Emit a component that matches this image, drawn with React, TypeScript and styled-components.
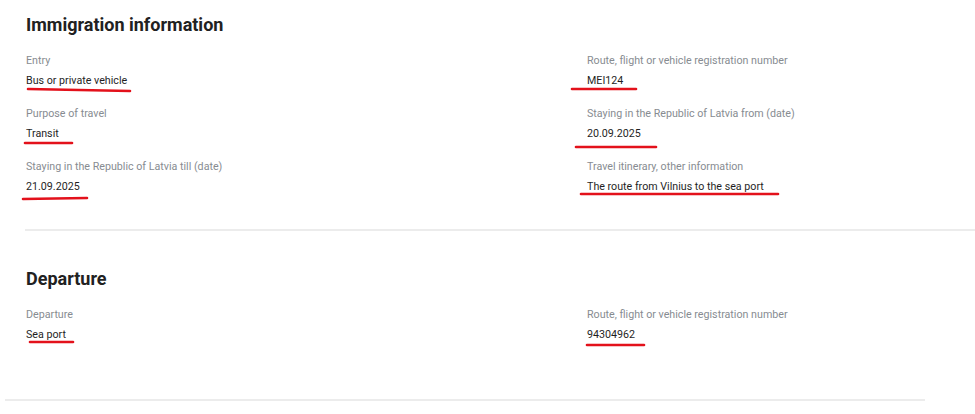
import React from "react";
import styled, { createGlobalStyle } from "styled-components";

const GlobalStyle = createGlobalStyle`
  html, body { margin: 0; padding: 0; background: #ffffff; }
  body { font-family: Roboto, "Noto Sans", "Liberation Sans", sans-serif; color: #222222; }
`;

const Page = styled.div`
  width: 975px;
  padding-top: 13px;
  box-sizing: border-box;
`;

const Section = styled.section<{ $top?: number }>`
  padding-left: 26px;
  padding-top: ${(p) => p.$top ?? 0}px;
`;

const Title = styled.h2`
  margin: 0 0 14px 0;
  font-size: 18px;
  line-height: 24px;
  font-weight: 700;
  color: #212121;
`;

const Grid = styled.div`
  display: grid;
  grid-template-columns: 561px 1fr;
  row-gap: 13px;
`;

const Field = styled.div`
  display: flex;
  flex-direction: column;
`;

const Label = styled.div`
  font-size: 10.7px;
  line-height: 20px;
  color: #878c91;
`;

const Value = styled.div`
  position: relative;
  font-size: 10.7px;
  line-height: 20px;
  color: #1f1f1f;
  width: max-content;
`;

const Mark = styled.svg`
  position: absolute;
  overflow: visible;
  pointer-events: none;
`;

const Divider = styled.hr<{ $left: number; $width?: number; $top: number }>`
  border: none;
  height: 2px;
  background: #ececec;
  margin: ${(p) => p.$top}px 0 0 ${(p) => p.$left}px;
  width: ${(p) => (p.$width ? `${p.$width}px` : "auto")};
`;

type Stroke = { dx: number; w: number; y1: number; y2: number };

const Underline = ({ s }: { s: Stroke }) => {
  const base = Math.min(s.y1, s.y2) - 1;
  return (
    <Mark width={s.w} height={4} style={{ left: s.dx, top: base }}>
      <line
        x1={0}
        y1={s.y1 - base}
        x2={s.w}
        y2={s.y2 - base}
        stroke="#e3111b"
        strokeWidth={2.6}
        strokeLinecap="round"
      />
    </Mark>
  );
};

type Item = { label: string; value: string; stroke: Stroke };

const InfoField = ({ item }: { item: Item }) => (
  <Field>
    <Label>{item.label}</Label>
    <Value>
      {item.value}
      <Underline s={item.stroke} />
    </Value>
  </Field>
);

const immigration: Item[] = [
  { label: "Entry", value: "Bus or private vehicle", stroke: { dx: 2, w: 102, y1: 18, y2: 20 } },
  { label: "Route, flight or vehicle registration number", value: "MEI124", stroke: { dx: -15, w: 64, y1: 18, y2: 18 } },
  { label: "Purpose of travel", value: "Transit", stroke: { dx: -1, w: 47, y1: 19, y2: 19 } },
  { label: "Staying in the Republic of Latvia from (date)", value: "20.09.2025", stroke: { dx: -11, w: 80, y1: 23, y2: 23 } },
  { label: "Staying in the Republic of Latvia till (date)", value: "21.09.2025", stroke: { dx: -3, w: 64, y1: 22, y2: 21 } },
  { label: "Travel itinerary, other information", value: "The route from Vilnius to the sea port", stroke: { dx: -6, w: 197, y1: 17, y2: 17 } },
];

const departure: Item[] = [
  { label: "Departure", value: "Sea port", stroke: { dx: 4, w: 43, y1: 17, y2: 17 } },
  { label: "Route, flight or vehicle registration number", value: "94304962", stroke: { dx: 0, w: 57, y1: 20, y2: 20 } },
];

export default function App() {
  return (
    <Page>
      <GlobalStyle />
      <Section>
        <Title>Immigration information</Title>
        <Grid>
          {immigration.map((it) => (
            <InfoField key={it.label + it.value} item={it} />
          ))}
        </Grid>
      </Section>
      <Divider $left={25} $top={32} />
      <Section $top={36}>
        <Title>Departure</Title>
        <Grid>
          {departure.map((it) => (
            <InfoField key={it.label + it.value} item={it} />
          ))}
        </Grid>
      </Section>
      <Divider $left={5} $width={920} $top={54} />
    </Page>
  );
}
